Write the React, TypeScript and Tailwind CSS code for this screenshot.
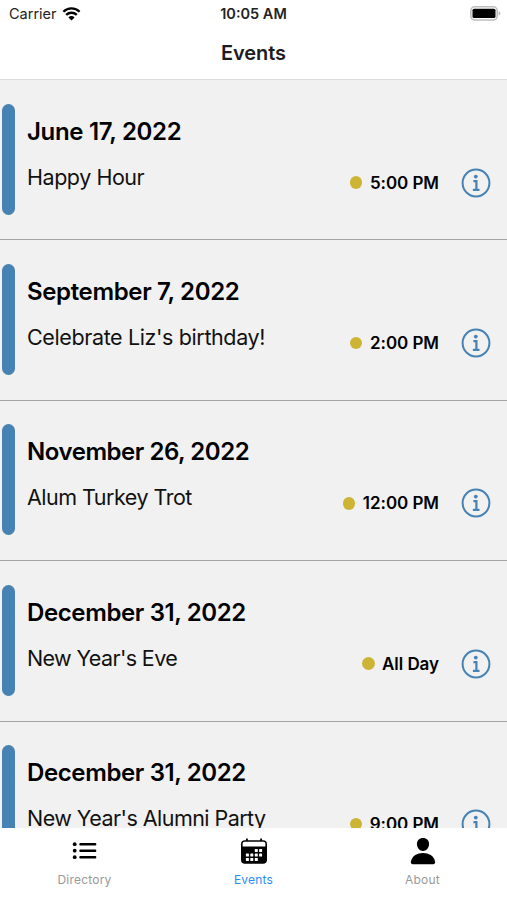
import React, { useState } from 'react'
import { IoPerson } from 'react-icons/io5'

const events = [
  { id: 1, date: 'June 17, 2022', title: 'Happy Hour', time: '5:00 PM', dateTrack: 'tracking-[-0.31px]', titleTrack: 'tracking-[-0.45px]' },
  { id: 2, date: 'September 7, 2022', title: "Celebrate Liz's birthday!", time: '2:00 PM', dateTrack: 'tracking-[-0.35px]', titleTrack: 'tracking-[-0.38px]' },
  { id: 3, date: 'November 26, 2022', title: 'Alum Turkey Trot', time: '12:00 PM', dateTrack: 'tracking-[-0.46px]', titleTrack: 'tracking-[-0.51px]' },
  { id: 4, date: 'December 31, 2022', title: "New Year's Eve", time: 'All Day', dateTrack: 'tracking-[-0.38px]', titleTrack: 'tracking-[-0.62px]' },
  { id: 5, date: 'December 31, 2022', title: "New Year's Alumni Party", time: '9:00 PM', dateTrack: 'tracking-[-0.38px]', titleTrack: 'tracking-[-0.54px]' },
]

const WifiIcon = () => (
  <svg width="19" height="14" viewBox="0 0 18 14" fill="none" stroke="#000" strokeWidth="2.3">
    <path d="M0.9 4.7a11.6 11.6 0 0 1 16.2 0" />
    <path d="M3.7 7.9a7.6 7.6 0 0 1 10.6 0" />
    <path d="M9 13.5L5.9 10.4a4.4 4.4 0 0 1 6.2 0z" fill="#000" stroke="none" />
  </svg>
)

const BatteryIcon = () => (
  <svg width="31" height="15" viewBox="0 0 31 15">
    <rect x="0.8" y="0.8" width="26.4" height="13.2" rx="4" fill="#fff" stroke="#bdbdbd" strokeWidth="1.6" />
    <rect x="2.5" y="2.7" width="23" height="9.4" rx="1.6" fill="#000" />
    <path d="M28.6 5.2c1.2.4 1.8 1.2 1.8 2.2s-.6 1.8-1.8 2.2z" fill="#bdbdbd" />
  </svg>
)

const InfoIcon = () => (
  <svg width="30" height="30" viewBox="0 0 30 30" fill="none" stroke="#4682b4" strokeWidth="2">
    <circle cx="15" cy="15" r="13.4" />
    <circle cx="14.8" cy="8.6" r="1.9" fill="#4682b4" stroke="none" />
    <path d="M12.4 13.1h3v8.6M11.900 21.900h6.600" strokeWidth="2.2" />
  </svg>
)

const ListIcon = () => (
  <svg width="25" height="20" viewBox="0 0 25 20">
    <circle cx="2.7" cy="3.2" r="1.9" />
    <circle cx="2.7" cy="9.7" r="1.9" />
    <circle cx="2.7" cy="16.2" r="1.9" />
    <rect x="7.300" y="1.9" width="17" height="2.6" rx="1" />
    <rect x="7.300" y="8.4" width="17" height="2.6" rx="1" />
    <rect x="7.300" y="14.9" width="17" height="2.6" rx="1" />
  </svg>
)

const CalendarIcon = () => (
  <svg width="28" height="27" viewBox="0 0 28 27">
    <path d="M6 0.5h1.8v1.7h12.4V0.5H22v1.7h1a4 4 0 0 1 4 4v15.6a4 4 0 0 1-4 4H5a4 4 0 0 1-4-4V6.2a4 4 0 0 1 4-4h1z" fill="#000" />
    <path d="M2.6 8.4V5.600a1.800 1.800 0 0 1 1.800-1.800h19.200a1.800 1.800 0 0 1 1.800 1.800v2.800z" fill="#fff" />
    <g fill="#fff">
      <rect x="14.8" y="10.9" width="3" height="3" rx="0.5" />
      <rect x="19.1" y="10.9" width="3" height="3" rx="0.5" />
      <rect x="5.9" y="15.4" width="3" height="3" rx="0.5" />
      <rect x="10.3" y="15.4" width="3" height="3" rx="0.5" />
      <rect x="14.8" y="15.4" width="3" height="3" rx="0.5" />
      <rect x="19.1" y="15.4" width="3" height="3" rx="0.5" />
      <rect x="5.9" y="19.9" width="3" height="3" rx="0.5" />
      <rect x="10.3" y="19.9" width="3" height="3" rx="0.5" />
      <rect x="14.8" y="19.9" width="3" height="3" rx="0.5" />
    </g>
  </svg>
)

const tabs = [
  { name: 'Directory', icon: <ListIcon /> },
  { name: 'Events', icon: <CalendarIcon /> },
  { name: 'About', icon: <IoPerson size={30} /> },
]

export default function App() {
  const [activeTab, setActiveTab] = useState('Events')

  return (
    <div className="flex h-[900px] w-[507px] flex-col overflow-hidden bg-white font-['Inter','Liberation_Sans',sans-serif] text-black">
      <div className="grid h-[27px] shrink-0 grid-cols-3 items-center">
        <div className="flex items-center gap-[5px] pl-[9px]">
          <span className="text-[14.5px] leading-5 text-[#222]">Carrier</span>
          <WifiIcon />
        </div>
        <div className="text-center text-[14.5px] font-semibold leading-5 text-[#222]">10:05 AM</div>
        <div className="flex justify-end pr-[6px]">
          <BatteryIcon />
        </div>
      </div>

      <header className="flex h-[53px] shrink-0 items-center justify-center border-b border-[#dcdcdc]">
        <h1 className="text-[20px] font-semibold leading-7 tracking-[-0.1px] text-[#1c1c1e]">Events</h1>
      </header>

      <main className="min-h-0 flex-1 overflow-hidden bg-[#f1f1f1]">
        {events.map((event) => (
          <div key={event.id} className="flex h-[160.4px] border-b border-[#a4a4a4] pl-[2px] pr-[16px] pt-[23.5px]">
            <div className="h-[111px] w-[12.5px] shrink-0 rounded-full bg-[#4682b4]" />
            <div className="ml-[12.5px] min-w-0 flex-1 pt-[12px]">
              <h2 className={`whitespace-nowrap text-[24px] font-semibold leading-[32px] ${event.dateTrack}`}>{event.date}</h2>
              <p className={`mt-[14px] whitespace-nowrap text-[21.5px] leading-[30px] text-[#111] ${event.titleTrack}`}>{event.title}</p>
            </div>
            <div className="mt-[60px] flex h-[38px] items-center">
              <span className="mr-[7.5px] size-[12.5px] rounded-full bg-[#cdb435]" />
              <span className="mr-[22px] whitespace-nowrap text-[17px] font-semibold leading-6 tracking-[-0.05px]">{event.time}</span>
              <InfoIcon />
            </div>
          </div>
        ))}
      </main>

      <nav className="grid h-[72px] shrink-0 grid-cols-3 bg-white">
        {tabs.map((tab) => (
          <button
            key={tab.name}
            type="button"
            onClick={() => setActiveTab(tab.name)}
            className="flex flex-col items-center pt-[9px]"
          >
            <span className="flex h-7 items-center">{tab.icon}</span>
            <span className={`mt-[7px] text-[12px] leading-4 tracking-[0.2px] ${activeTab === tab.name ? 'text-[#2a8df5]' : 'text-[#999]'}`}>
              {tab.name}
            </span>
          </button>
        ))}
      </nav>
    </div>
  )
}
